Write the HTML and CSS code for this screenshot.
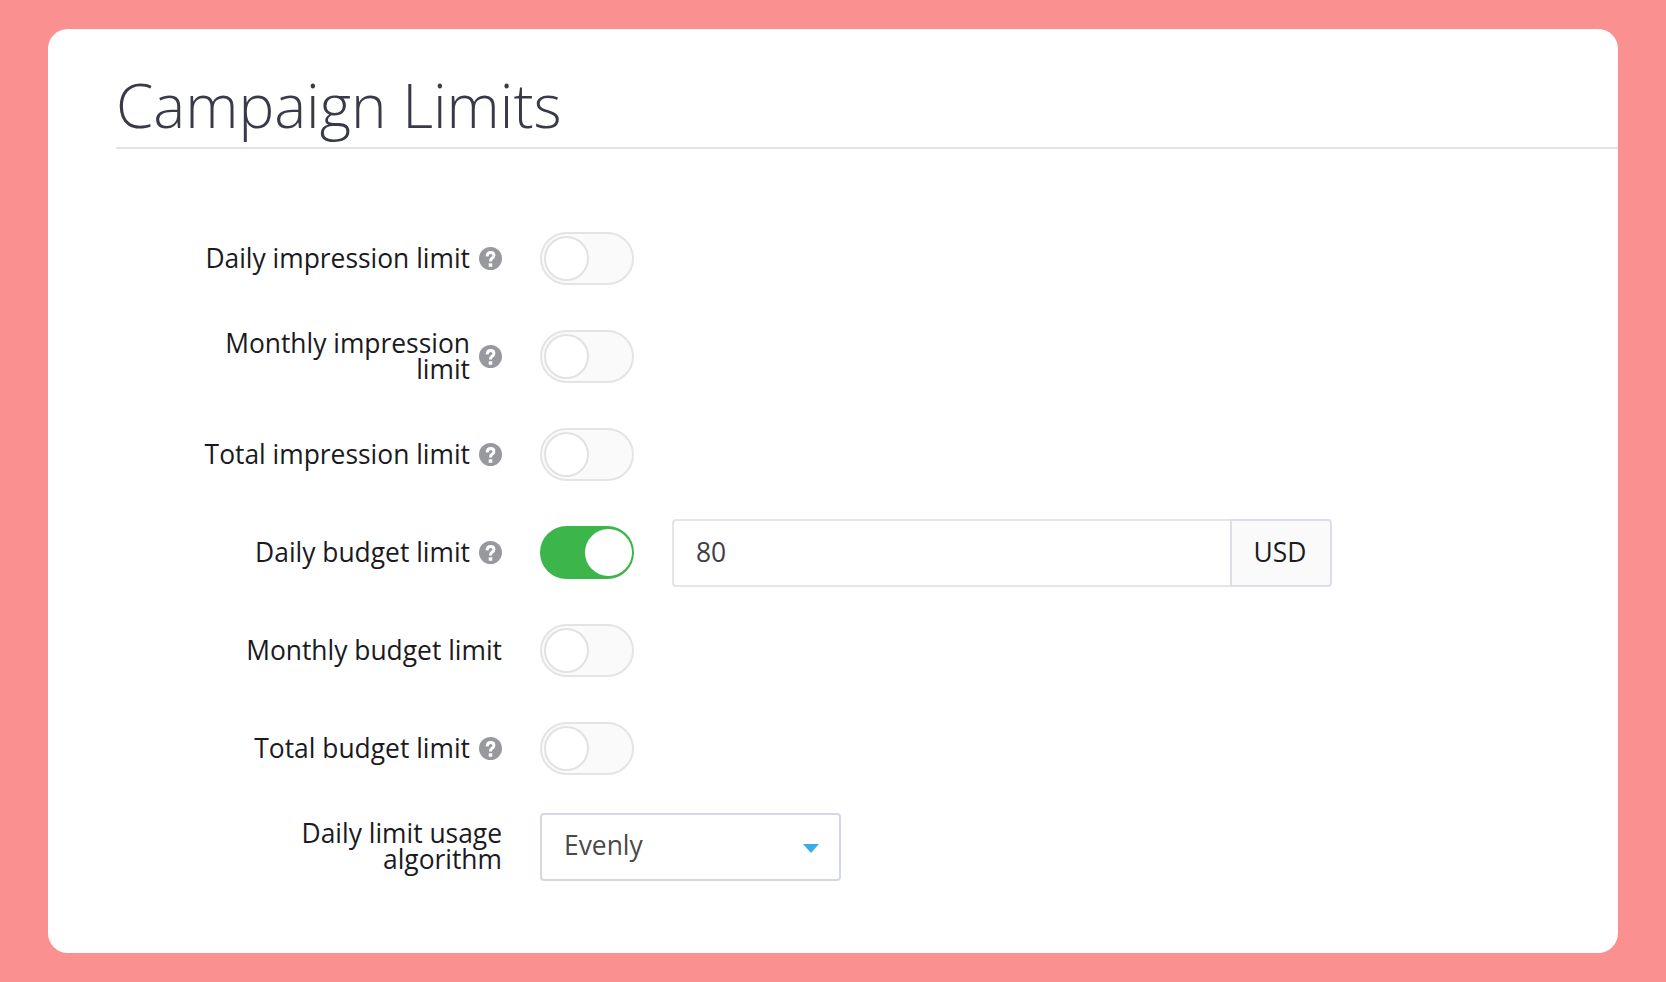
FILE: index.html
```html
<!DOCTYPE html>
<html lang="en">
<head>
    <meta charset="UTF-8">
    <meta name="viewport" content="width=device-width, initial-scale=1.0">
    <title>Campaign Limits</title>
    <link rel="stylesheet" href="styles.css">
</head>
<body>
    <svg class="icon-defs" width="0" height="0">
        <symbol id="help" viewBox="0 0 22 22">
            <circle cx="11" cy="11" r="11" fill="#98989f"/>
            <path d="M7.700 9C7.900 6.500 9.300 5.200 11.100 5.200C13 5.200 14.300 6.400 14.300 8.100C14.300 9.500 13.400 10.200 12.500 10.800C11.500 11.500 11 12 11 13.800" fill="none" stroke="#fff" stroke-width="2.800"/>
            <rect x="9.300" y="15.600" width="3.400" height="3.300" fill="#fff"/>
        </symbol>
    </svg>

    <div class="card">
        <h1 class="title">Campaign Limits</h1>

        <div class="form">
            <div class="row">
                <div class="label">
                    <span>Daily impression limit</span>
                    <svg class="help"><use href="#help"/></svg>
                </div>
                <span class="toggle"><span class="knob"></span></span>
            </div>
            <div class="row">
                <div class="label">
                    <span>Monthly impression limit</span>
                    <svg class="help"><use href="#help"/></svg>
                </div>
                <span class="toggle"><span class="knob"></span></span>
            </div>
            <div class="row">
                <div class="label">
                    <span>Total impression limit</span>
                    <svg class="help"><use href="#help"/></svg>
                </div>
                <span class="toggle"><span class="knob"></span></span>
            </div>
            <div class="row">
                <div class="label">
                    <span>Daily budget limit</span>
                    <svg class="help"><use href="#help"/></svg>
                </div>
                <span class="toggle on"><span class="knob"></span></span>
                <div class="input-group">
                    <input class="input" type="text" value="80">
                    <span class="addon">USD</span>
                </div>
            </div>
            <div class="row">
                <div class="label">
                    <span>Monthly budget limit</span>
                </div>
                <span class="toggle"><span class="knob"></span></span>
            </div>
            <div class="row">
                <div class="label">
                    <span>Total budget limit</span>
                    <svg class="help"><use href="#help"/></svg>
                </div>
                <span class="toggle"><span class="knob"></span></span>
            </div>
            <div class="row">
                <div class="label">
                    <span>Daily limit usage algorithm</span>
                </div>
                <div class="select">
                    <span>Evenly</span>
                    <span class="caret"></span>
                </div>
            </div>
        </div>
    </div>
</body>
</html>
```

FILE: styles.css
```css
* {
    box-sizing: border-box;
}
html, body {
    height: 100%;
}
body {
    margin: 0;
    padding: 29px 48px;
    background-color: #fb9090;
    font-family: "Open Sans", "Liberation Sans", sans-serif;
    overflow: hidden;
}
.icon-defs {
    position: absolute;
}
.card {
    height: 924px;
    padding-left: 68px;
    background: white;
    border-radius: 20px;
}
.title {
    height: 120px;
    margin: 0;
    padding-top: 35px;
    border-bottom: 2px solid #e2e3e5;
    color: #383a48;
    font-size: 60.200px;
    font-weight: 300;
    line-height: 82px;
}
.form {
    padding-top: 60px;
    padding-left: 81px;
}
.row {
    display: flex;
    align-items: center;
    height: 98px;
}
.label {
    display: flex;
    flex: none;
    align-items: center;
    justify-content: flex-end;
    gap: 9px;
    width: 305px;
    margin-right: 38px;
    color: #1a1a1f;
    font-size: 26.400px;
    line-height: 26.500px;
    text-align: right;
}
.help {
    flex: none;
    width: 23px;
    height: 23px;
}
.toggle {
    display: flex;
    flex: none;
    width: 94px;
    height: 53px;
    padding: 2px;
    background: #fafafa;
    border: 2px solid #e4e4e4;
    border-radius: 27px;
}
.knob {
    width: 45px;
    height: 45px;
    background: white;
    border: 2px solid #e2e2e2;
    border-radius: 50%;
}
.toggle.on {
    justify-content: flex-end;
    padding: 2px;
    background: #3cb54a;
    border: none;
}
.toggle.on .knob {
    width: 47px;
    height: 47px;
    margin-top: 1px;
    border: none;
}
.input-group {
    display: flex;
    width: 660px;
    height: 68px;
    margin-top: 2px;
    margin-left: 38px;
}
.input {
    flex: 1;
    min-width: 0;
    padding: 0 22px 2px;
    background: white;
    border: 2px solid #e4e5e9;
    border-right: none;
    border-radius: 4px 0 0 4px;
    color: #3c3d49;
    font-family: inherit;
    font-size: 26.400px;
}
.addon {
    display: flex;
    align-items: center;
    justify-content: center;
    width: 102px;
    padding: 0 2px 2px 0;
    background: #fafafa;
    border: 2px solid #dcdfe7;
    border-radius: 0 4px 4px 0;
    color: #1a1a1f;
    font-size: 26.400px;
}
.select {
    display: flex;
    align-items: center;
    justify-content: space-between;
    width: 301px;
    height: 68px;
    margin-top: 2px;
    padding: 0 20px 4px 22px;
    background: white;
    border: 2px solid #d4d8e4;
    border-radius: 4px;
    color: #4a4a4a;
    font-size: 26.400px;
}
.caret {
    width: 0;
    height: 0;
    margin-top: 7px;
    border-top: 9px solid #3aaee3;
    border-left: 8px solid transparent;
    border-right: 8px solid transparent;
}
```
